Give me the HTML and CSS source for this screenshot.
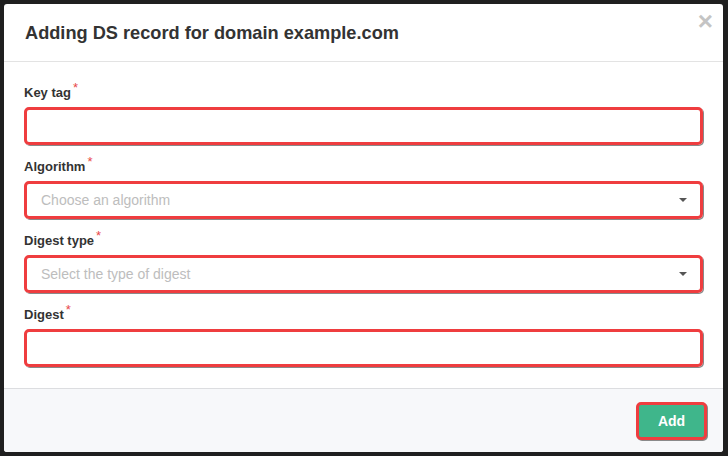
FILE: index.html
```html
<!DOCTYPE html>
<html>
<head>
<meta charset="utf-8">
<link rel="stylesheet" href="styles.css">
</head>
<body>
<div class="modal">
  <div class="modal-header">
    <h1 class="modal-title">Adding DS record for domain example.com</h1>
    <span class="close">&times;</span>
  </div>
  <div class="modal-body">
    <div class="group">
      <label class="label">Key tag<span class="req">*</span></label>
      <div class="field"></div>
    </div>
    <div class="group">
      <label class="label">Algorithm<span class="req">*</span></label>
      <div class="field select"><span class="ph">Choose an algorithm</span><span class="caret"></span></div>
    </div>
    <div class="group">
      <label class="label">Digest type<span class="req">*</span></label>
      <div class="field select"><span class="ph">Select the type of digest</span><span class="caret"></span></div>
    </div>
    <div class="group last">
      <label class="label">Digest<span class="req">*</span></label>
      <div class="field"></div>
    </div>
  </div>
  <div class="modal-footer">
    <button class="btn-add">Add</button>
  </div>
</div>
</body>
</html>
```

FILE: styles.css
```css
html, body {
  margin: 0;
  height: 100%;
}
body {
  background: #1f1f1f;
  padding: 4px 5px 4px 4px;
  box-sizing: border-box;
  font-family: "Liberation Sans", Arial, sans-serif;
  color: #333;
}
.modal {
  width: 719px;
  height: 448px;
  background: #fff;
  border-radius: 3px;
  display: flex;
  flex-direction: column;
  overflow: hidden;
}
.modal-header {
  height: 58px;
  box-sizing: border-box;
  border-bottom: 1px solid #e3e3e3;
  padding: 0 21px;
  display: flex;
  align-items: center;
  justify-content: space-between;
}
.modal-title {
  margin: 0;
  font-size: 18.2px;
  font-weight: bold;
  color: #333;
  position: relative;
  top: 1px;
}
.close {
  color: #c4c4c4;
  font-size: 26px;
  font-weight: bold;
  line-height: 1;
  margin-right: -11px;
  position: relative;
  top: -12px;
}
.modal-body {
  padding: 22px 20px 21px;
  flex: none;
}
.group {
  margin-bottom: 13px;
}
.group.last {
  margin-bottom: 0;
}
.label {
  display: block;
  font-size: 13px;
  font-weight: bold;
  line-height: 18px;
  margin-bottom: 5px;
  color: #333;
}
.req {
  color: #e8474a;
  font-weight: normal;
  font-size: 13px;
  position: relative;
  top: -5px;
  margin-left: 2px;
}
.field {
  height: 38px;
  box-sizing: border-box;
  border: 3px solid #ef3d3f;
  border-radius: 5px;
  box-shadow: 1px 1px 0 #8a8a8a;
  display: flex;
  align-items: center;
  padding: 0 14px;
}
.ph {
  font-size: 14px;
  color: #bdbdbd;
  flex: 1;
}
.caret {
  width: 0;
  height: 0;
  border-left: 4px solid transparent;
  border-right: 4px solid transparent;
  border-top: 4px solid #555;
  margin-right: -1px;
}
.modal-footer {
  flex: 1;
  background: #f7f8fa;
  border-top: 1px solid #dcdde0;
  display: flex;
  justify-content: flex-end;
  align-items: flex-start;
  padding: 13px 16px 0 0;
}
.btn-add {
  width: 71px;
  height: 38px;
  box-sizing: border-box;
  background: #3fb68b;
  border: 3px solid #ef3d3f;
  border-radius: 5px;
  box-shadow: 1px 1px 0 #8a8a8a;
  color: #fff;
  font-family: "Liberation Sans", Arial, sans-serif;
  font-weight: bold;
  font-size: 14px;
  padding: 0;
}
```
